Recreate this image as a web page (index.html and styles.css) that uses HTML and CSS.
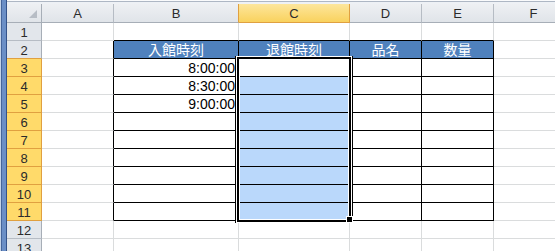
FILE: index.html
```html
<!DOCTYPE html>
<html lang="ja">
<head>
<meta charset="utf-8">
<title>Sheet</title>
<link rel="stylesheet" href="styles.css">
</head>
<body>
<div class="app">
  <div class="frame"></div>
  <div class="main">
    <div class="topbar"></div>
    <div class="sheet">
      <div class="corner"><span class="tri"></span></div>
      <div class="ch">A</div><div class="ch pre">B</div><div class="ch sel">C</div><div class="ch">D</div><div class="ch">E</div><div class="ch">F</div>

      <div class="rh">1</div><div class="c"></div><div class="c tt"></div><div class="c tt"></div><div class="c tt"></div><div class="c tt"></div><div class="c"></div>

      <div class="rh pre">2</div><div class="c lb"></div><div class="c hd">入館時刻</div><div class="c hd">退館時刻</div><div class="c hd">品名</div><div class="c hd">数量</div><div class="c"></div>

      <div class="rh sel">3</div><div class="c lb"></div><div class="c tb num">8:00:00</div><div class="c tb"></div><div class="c tb"></div><div class="c tb"></div><div class="c"></div>
      <div class="rh sel">4</div><div class="c lb"></div><div class="c tb num">8:30:00</div><div class="c tb s"></div><div class="c tb"></div><div class="c tb"></div><div class="c"></div>
      <div class="rh sel">5</div><div class="c lb"></div><div class="c tb num">9:00:00</div><div class="c tb s"></div><div class="c tb"></div><div class="c tb"></div><div class="c"></div>
      <div class="rh sel">6</div><div class="c lb"></div><div class="c tb"></div><div class="c tb s"></div><div class="c tb"></div><div class="c tb"></div><div class="c"></div>
      <div class="rh sel">7</div><div class="c lb"></div><div class="c tb"></div><div class="c tb s"></div><div class="c tb"></div><div class="c tb"></div><div class="c"></div>
      <div class="rh sel">8</div><div class="c lb"></div><div class="c tb"></div><div class="c tb s"></div><div class="c tb"></div><div class="c tb"></div><div class="c"></div>
      <div class="rh sel">9</div><div class="c lb"></div><div class="c tb"></div><div class="c tb s"></div><div class="c tb"></div><div class="c tb"></div><div class="c"></div>
      <div class="rh sel">10</div><div class="c lb"></div><div class="c tb"></div><div class="c tb s"></div><div class="c tb"></div><div class="c tb"></div><div class="c"></div>
      <div class="rh sel">11</div><div class="c lb"></div><div class="c tb"></div><div class="c tb s"></div><div class="c tb"></div><div class="c tb"></div><div class="c"></div>

      <div class="rh">12</div><div class="c"></div><div class="c"></div><div class="c"></div><div class="c"></div><div class="c"></div><div class="c"></div>
      <div class="rh">13</div><div class="c"></div><div class="c"></div><div class="c"></div><div class="c"></div><div class="c"></div><div class="c"></div>

      <div class="selection"><span class="handle"></span></div>
    </div>
  </div>
</div>
</body>
</html>
```
FILE: styles.css
```css
html, body {
  margin: 0;
  padding: 0;
  background: #ffffff;
}
body {
  width: 555px;
  height: 251px;
  overflow: hidden;
}
.app {
  display: flex;
  height: 251px;
}
.frame {
  width: 7px;
  flex: none;
  background: linear-gradient(to right, #c3d3e8 0 1px, #46659a 1px 2px, #6b8fc6 2px 6px, #34538a 6px 7px);
}
.main {
  flex: 1;
  display: flex;
  flex-direction: column;
  overflow: hidden;
}
.topbar {
  height: 4px;
  flex: none;
  background: linear-gradient(#fafbfc 0 1px, #aeb7c4 1px 2px, #eef1f5 2px 4px);
}
.sheet {
  position: relative;
  display: grid;
  grid-template-columns: 35px 72px 125px 111px 72px 72px 80px;
  grid-template-rows: 19px repeat(13, 18px);
}
.sheet > div {
  box-sizing: border-box;
  border-right: 1px solid #dadcdd;
  border-bottom: 1px solid #dadcdd;
  font-family: "Noto Sans CJK JP", "Noto Sans", sans-serif;
  font-size: 14px;
  line-height: 17px;
  color: #000;
  white-space: nowrap;
}
.sheet > .corner {
  background: linear-gradient(#eef0f3, #e0e4e9);
  border-right-color: #a7aeb7;
  border-bottom-color: #a7aeb7;
  display: flex;
  justify-content: flex-end;
  align-items: flex-end;
  padding: 0 4px 4px 0;
}
.tri {
  width: 0;
  height: 0;
  border-left: 8px solid transparent;
  border-bottom: 8px solid #b7bdc5;
}
.sheet > .ch,
.sheet > .rh {
  font-family: "Liberation Sans", Arial, sans-serif;
  font-size: 13px;
  line-height: 16px;
  padding-top: 2px;
  color: #2b2b2b;
  text-align: center;
}
.sheet > .ch {
  background: linear-gradient(#eef0f3, #e0e4e9);
  border-right-color: #b6bcc4;
  border-bottom-color: #a7aeb7;
}
.sheet > .ch.pre {
  border-right-color: #e0a040;
}
.sheet > .ch.sel {
  background: linear-gradient(#fde69c, #f9d25e);
  border-right-color: #e0a040;
  border-bottom-color: #e0a040;
}
.sheet > .rh {
  background: #e2e6eb;
  border-right-color: #a7aeb7;
  border-bottom-color: #b6bcc4;
}
.sheet > .rh.pre {
  border-bottom-color: #e0a040;
}
.sheet > .rh.sel {
  background: #ffda6a;
  border-right-color: #e0a040;
  border-bottom-color: #e0a040;
}
.sheet > .lb {
  border-right-color: #000;
}
.sheet > .tt {
  border-bottom-color: #000;
}
.sheet > .tb {
  border-right-color: #000;
  border-bottom-color: #000;
}
.sheet > .hd {
  background: #4f81bd;
  color: #ffffff;
  text-align: center;
  border-right-color: #000;
  border-bottom-color: #000;
}
.sheet > .num {
  font-family: "Liberation Sans", Arial, sans-serif;
  line-height: 16px;
  padding-top: 1px;
  text-align: right;
  padding-right: 3px;
}
.sheet > .s {
  background: #bad8fb;
}
.sheet > .selection {
  position: absolute;
  left: 230px;
  top: 53px;
  width: 114px;
  height: 165px;
  border: 2px solid #000;
  box-shadow: inset 0 0 0 1px #ffffff, 0 0 0 1px #ffffff, -1px 0 0 1px #000, 1px 0 0 1px #000;
  pointer-events: none;
}
.handle {
  position: absolute;
  right: -4px;
  bottom: -3px;
  width: 5px;
  height: 5px;
  background: #000;
  border: 1px solid #ffffff;
}
```
